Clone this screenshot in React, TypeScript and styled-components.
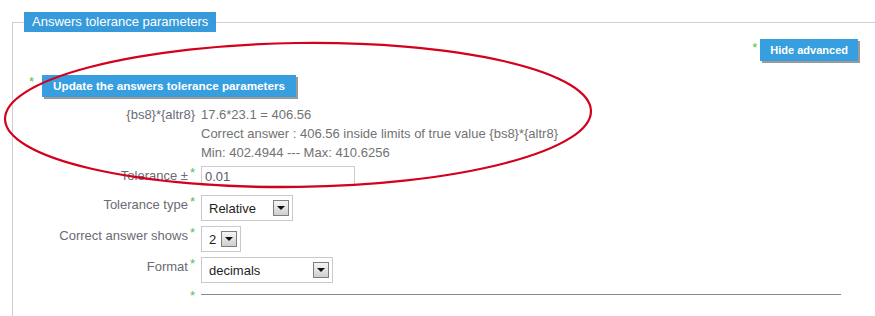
import React from "react";
import styled, { createGlobalStyle } from "styled-components";

const GlobalStyle = createGlobalStyle`
  html, body {
    margin: 0;
    padding: 0;
    background: #fff;
    overflow: hidden;
  }
  body {
    font-family: "Liberation Sans", Arial, sans-serif;
    font-size: 13px;
  }
`;

const Page = styled.div`
  position: relative;
  width: 875px;
  height: 316px;
  padding-top: 22px;
  box-sizing: border-box;
`;

const Frame = styled.div`
  margin-left: 12px;
  border-top: 1px solid #cfcfcf;
  border-left: 1px solid #cfcfcf;
  height: 300px;
`;

const Legend = styled.div`
  width: max-content;
  margin: -11px 0 0 11px;
  height: 20px;
  line-height: 20px;
  padding: 0 8px;
  background: #379bdb;
  color: #fff;
  font-size: 13px;
`;

const Star = styled.span<{ $drop?: number }>`
  display: inline-block;
  color: #52c252;
  font-size: 13px;
  line-height: 13px;
  margin-top: ${(p) => p.$drop ?? 0}px;
`;

const LabelStar = styled.span`
  color: #52c252;
  font-size: 13px;
  line-height: 1;
  vertical-align: 3px;
  margin-left: 2px;
`;

const HideRow = styled.div`
  display: flex;
  justify-content: flex-end;
  align-items: flex-start;
  gap: 3px;
  margin-top: 7px;
  padding-right: 17px;
`;

const UpdateRow = styled.div`
  display: flex;
  align-items: flex-start;
  gap: 8px;
  margin-top: 14px;
  padding-left: 16px;
`;

const Button = styled.button<{ $pad: number; $size: number }>`
  height: 22px;
  line-height: 22px;
  padding: 0 ${(p) => p.$pad}px;
  border: none;
  background: #379fdf;
  color: #fff;
  font-family: "Liberation Sans", Arial, sans-serif;
  font-weight: bold;
  font-size: ${(p) => p.$size}px;
  box-shadow: 2px 2px 0 #9a9a9a;
  cursor: pointer;
`;

const Row = styled.div<{ $gap: number }>`
  display: flex;
  align-items: flex-start;
  gap: 5px;
  margin-top: ${(p) => p.$gap}px;
`;

const Label = styled.div`
  width: 182px;
  padding-right: 1px;
  text-align: right;
  line-height: 19px;
  color: #6b6b74;
  white-space: nowrap;
`;

const Info = styled.div`
  line-height: 19px;
  color: #727272;
`;

const TextInput = styled.div`
  width: 149px;
  height: 18px;
  border: 1px solid #cccccc;
  padding-left: 3px;
  line-height: 20px;
  color: #5a5a6a;
  box-sizing: content-box;
`;

const Select = styled.div<{ $width: number }>`
  width: ${(p) => p.$width}px;
  height: 26px;
  box-sizing: border-box;
  border: 1px solid #c9c9c9;
  display: flex;
  align-items: center;
  justify-content: space-between;
  padding: 0 3px 0 7px;
  color: #1e1e1e;
  font-size: 13px;
`;

const DropButton = styled.span`
  width: 16px;
  height: 16px;
  box-sizing: border-box;
  border: 1px solid #7e7e7e;
  background: linear-gradient(#f6f6f6, #cfcfcf);
  display: flex;
  align-items: center;
  justify-content: center;

  &::after {
    content: "";
    border-left: 4px solid transparent;
    border-right: 4px solid transparent;
    border-top: 4px solid #111;
  }
`;

const Rule = styled.div`
  width: 640px;
  border-top: 1px solid #888;
  margin-top: 5px;
`;

const Overlay = styled.svg`
  position: absolute;
  left: 0;
  top: 0;
  pointer-events: none;
`;

const Field = ({ label, star = true }: { label: string; star?: boolean }) => (
  <Label>
    {label}
    {star && <LabelStar>*</LabelStar>}
  </Label>
);

const App = () => {
  return (
    <Page>
      <GlobalStyle />
      <Frame>
        <Legend>Answers tolerance parameters</Legend>

        <HideRow>
          <Star $drop={2}>*</Star>
          <Button $pad={10} $size={11}>Hide advanced</Button>
        </HideRow>

        <UpdateRow>
          <Star>*</Star>
          <Button $pad={11} $size={11.7}>Update the answers tolerance parameters</Button>
        </UpdateRow>

        <Row $gap={8}>
          <Field label="{bs8}*{altr8}" star={false} />
          <Info>
            17.6*23.1 = 406.56
            <br />
            Correct answer : 406.56 inside limits of true value {"{bs8}*{altr8}"}
            <br />
            Min: 402.4944 --- Max: 410.6256
          </Info>
        </Row>

        <Row $gap={4}>
          <Field label="Tolerance ±" />
          <TextInput>0.01</TextInput>
        </Row>

        <Row $gap={9}>
          <Field label="Tolerance type" />
          <Select $width={92}>
            Relative
            <DropButton />
          </Select>
        </Row>

        <Row $gap={5}>
          <Field label="Correct answer shows" />
          <Select $width={40}>
            2
            <DropButton />
          </Select>
        </Row>

        <Row $gap={5}>
          <Field label="Format" />
          <Select $width={132}>
            decimals
            <DropButton />
          </Select>
        </Row>

        <Row $gap={6}>
          <Field label="" />
          <Rule />
        </Row>
      </Frame>

      <Overlay width="875" height="316" viewBox="0 0 875 316">
        <ellipse
          cx="298"
          cy="115"
          rx="293"
          ry="72"
          fill="none"
          stroke="#d3001e"
          strokeWidth="2.2"
          transform="rotate(-0.8 298 115)"
        />
      </Overlay>
    </Page>
  );
};

export default App;
